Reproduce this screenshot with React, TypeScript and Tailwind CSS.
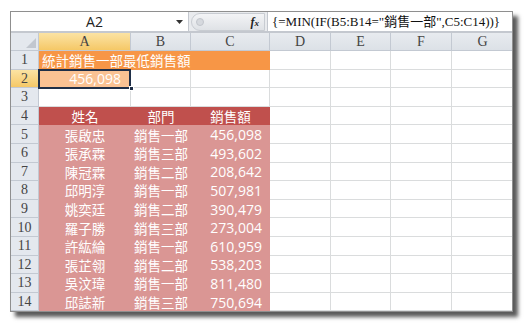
import React from 'react';

const cols = [
  { key: 'A', w: 'w-[92px]' },
  { key: 'B', w: 'w-[60px]' },
  { key: 'C', w: 'w-[79px]' },
  { key: 'D', w: 'w-[61px]' },
  { key: 'E', w: 'w-[60px]' },
  { key: 'F', w: 'w-[61px]' },
  { key: 'G', w: 'w-[62px]' },
];

const data = [
  ['張啟忠', '銷售一部', '456,098'],
  ['張承霖', '銷售三部', '493,602'],
  ['陳冠霖', '銷售二部', '208,642'],
  ['邱明淳', '銷售一部', '507,981'],
  ['姚奕廷', '銷售二部', '390,479'],
  ['羅子勝', '銷售三部', '273,004'],
  ['許紘綸', '銷售一部', '610,959'],
  ['張芷翎', '銷售二部', '538,203'],
  ['吳汶瑋', '銷售一部', '811,480'],
  ['邱誌新', '銷售三部', '750,694'],
];

const cjk = { fontFamily: '"Noto Sans CJK TC", sans-serif' };
const num = { fontFamily: '"Open Sans", "Noto Sans CJK TC", sans-serif' };
const hdr = { fontFamily: '"Liberation Serif", serif' };

const RowHead = ({ n, active }: { n: number; active?: boolean }) => (
  <div
    className={`w-[28px] shrink-0 h-full flex items-center justify-center border-r border-b border-[#c3c9d2] text-[14px] text-[#444] ${
      active ? 'bg-gradient-to-b from-[#fbe3a3] to-[#f5c866]' : 'bg-[#e4e8ee]'
    }`}
    style={hdr}
  >
    {n}
  </div>
);

const Empty = ({ w }: { w: string }) => (
  <div className={`${w} shrink-0 h-full border-r border-b border-[#dadcdd]`} />
);

const Row = ({ children }: { children: React.ReactNode }) => (
  <div className="flex h-[18.6px]">{children}</div>
);

export default function App() {
  return (
    <div className="w-[529px] h-[330px] bg-white pl-[10px] pt-[11px]">
      <div className="w-[503px] h-[301px] border border-[#8f8f8f] bg-white shadow-[5px_5px_4px_rgba(0,0,0,0.65)] overflow-hidden flex flex-col">
        {/* formula bar */}
        <div className="flex h-[20px] bg-[#e9ebee] border-b border-[#c4c8cf]">
          <div className="w-[178px] bg-white flex items-center border-r border-[#c4c8cf]">
            <div className="flex-1 text-center text-[14px] text-[#222] pl-[4px]" style={num}>
              A2
            </div>
            <svg width="12" height="8" viewBox="0 0 12 8" className="mr-[2px]">
              <path d="M2 2h7l-3.5 4z" fill="#333" />
            </svg>
          </div>
          <div className="w-[78px] flex items-center pl-[2px]">
            <div className="h-[18px] w-[74px] rounded-l-full bg-gradient-to-b from-[#f3f4f6] to-[#dfe2e6] border border-[#c8ccd2] flex items-center justify-between pl-[4px] pr-[5px]">
              <div className="w-[8px] h-[8px] rounded-full bg-[#d6d9de] border border-[#c2c6cc]" />
              <span className="text-[12px] italic font-bold text-[#222]" style={hdr}>
                f<span className="text-[9px]">x</span>
              </span>
            </div>
          </div>
          <div
            className="flex-1 bg-white border-l border-[#c4c8cf] flex items-center pl-[4px] text-[13px] text-[#111] whitespace-nowrap"
            style={{ fontFamily: '"Liberation Serif", "Noto Sans CJK TC", serif' }}
          >
            {'{=MIN(IF(B5:B14="銷售一部",C5:C14))}'}
          </div>
        </div>
        <div className="h-[2px] bg-[#dfe3e8] border-b border-[#c4c8cf]" />

        {/* column headers */}
        <div className="flex h-[18px]">
          <div className="w-[28px] shrink-0 h-full bg-[#e4e8ee] border-r border-b border-[#c3c9d2] flex items-end justify-end p-[2px]">
            <svg width="10" height="10" viewBox="0 0 10 10">
              <path d="M10 0v10H0z" fill="#c2c7cf" />
            </svg>
          </div>
          {cols.map((c) => (
            <div
              key={c.key}
              className={`${c.w} shrink-0 h-full flex items-center justify-center border-r border-b border-[#c3c9d2] text-[14px] text-[#444] ${
                c.key === 'A'
                  ? 'bg-gradient-to-b from-[#fbe3a3] to-[#f5c866]'
                  : 'bg-gradient-to-b from-[#e8ebef] to-[#dce1e7]'
              }`}
              style={hdr}
            >
              {c.key}
            </div>
          ))}
        </div>

        {/* row 1 */}
        <Row>
          <RowHead n={1} />
          <div
            className="w-[231px] shrink-0 h-full bg-[#f79646] border-b border-r border-[#f79646] text-white text-[13.5px] flex items-center pl-[3px] whitespace-nowrap"
            style={cjk}
          >
            統計銷售一部最低銷售額
          </div>
          {cols.slice(3).map((c) => (
            <Empty key={c.key} w={c.w} />
          ))}
        </Row>

        {/* row 2 */}
        <Row>
          <RowHead n={2} active />
          <div className="w-[92px] shrink-0 h-full relative">
            <div
              className="absolute -left-[1px] -top-[1px] w-[93px] h-[20px] border-2 border-[#1f2f48] bg-[#fac293] text-white text-[14px] flex items-center justify-end pr-[8px]"
              style={num}
            >
              456,098
            </div>
            <div className="absolute -right-[3px] -bottom-[3px] w-[5px] h-[5px] bg-[#1f2f48] border border-white z-10" />
          </div>
          {cols.slice(1).map((c) => (
            <Empty key={c.key} w={c.w} />
          ))}
        </Row>

        {/* row 3 */}
        <Row>
          <RowHead n={3} />
          {cols.map((c) => (
            <Empty key={c.key} w={c.w} />
          ))}
        </Row>

        {/* row 4 header */}
        <Row>
          <RowHead n={4} />
          <div className="w-[92px] shrink-0 h-full bg-[#c0504d] text-white text-[13.5px] flex items-center justify-center" style={cjk}>
            姓名
          </div>
          <div className="w-[60px] shrink-0 h-full bg-[#c0504d] text-white text-[13.5px] flex items-center justify-center" style={cjk}>
            部門
          </div>
          <div className="w-[79px] shrink-0 h-full bg-[#c0504d] text-white text-[13.5px] flex items-center justify-center" style={cjk}>
            銷售額
          </div>
          {cols.slice(3).map((c) => (
            <Empty key={c.key} w={c.w} />
          ))}
        </Row>

        {data.map((r, i) => (
          <Row key={i}>
            <RowHead n={i + 5} />
            <div className="w-[92px] shrink-0 h-full bg-[#da9694] text-white text-[13.5px] flex items-center justify-center" style={cjk}>
              {r[0]}
            </div>
            <div className="w-[60px] shrink-0 h-full bg-[#da9694] text-white text-[13.5px] flex items-center justify-center" style={cjk}>
              {r[1]}
            </div>
            <div className="w-[79px] shrink-0 h-full bg-[#da9694] text-white text-[14px] flex items-center justify-end pr-[8px]" style={num}>
              {r[2]}
            </div>
            {cols.slice(3).map((c) => (
              <Empty key={c.key} w={c.w} />
            ))}
          </Row>
        ))}
      </div>
    </div>
  );
}
